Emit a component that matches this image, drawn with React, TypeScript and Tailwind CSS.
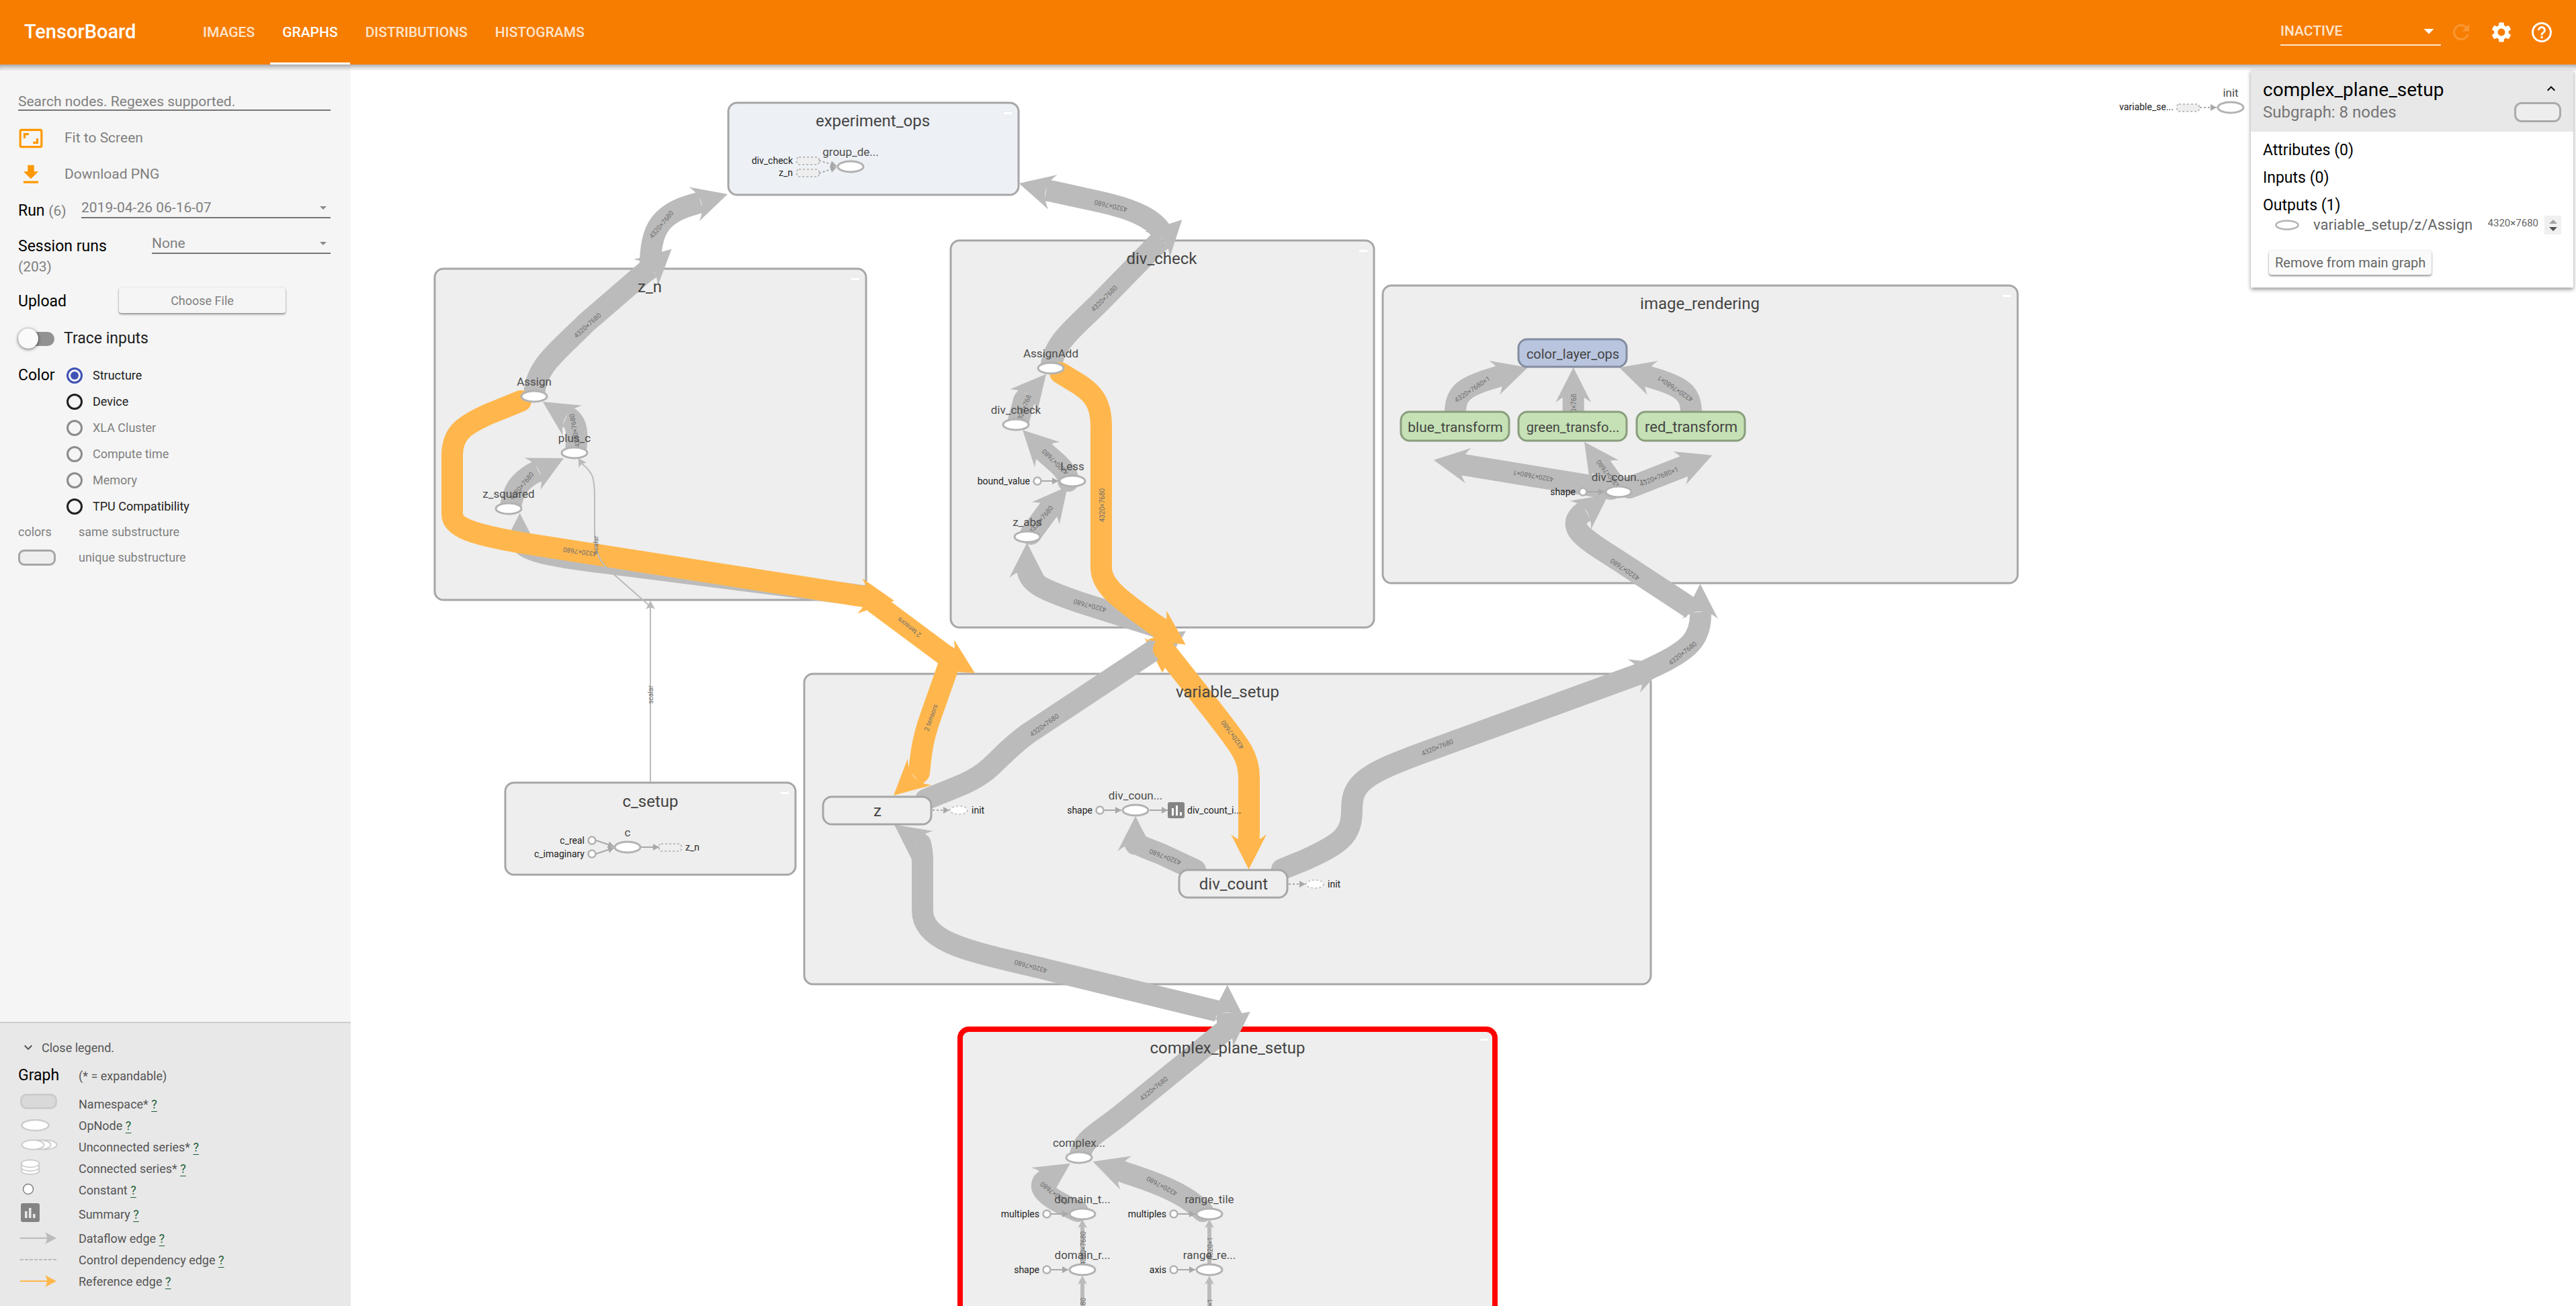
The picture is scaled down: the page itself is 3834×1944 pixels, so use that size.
import React from "react";
import {
  MdAspectRatio,
  MdFileDownload,
  MdRefresh,
  MdSettings,
  MdHelpOutline,
  MdExpandMore,
  MdExpandLess,
  MdArrowDropDown,
} from "react-icons/md";

const GRAY = "#bbbbbb";
const ORANGE = "#ffb74d";

/* ---------- graph primitives ---------- */

type Head = [tipX: number, tipY: number, baseX: number, baseY: number];

function ArrowHead({ head, color }: { head: Head; color: string }) {
  const [tx, ty, bx, by] = head;
  const angle = (Math.atan2(ty - by, tx - bx) * 180) / Math.PI;
  return (
    <path
      d="M0,0 L-52,26.5 Q-30,0 -52,-26.5 Z"
      fill={color}
      transform={`translate(${tx} ${ty}) rotate(${angle})`}
    />
  );
}

function Edge({ d, head, color = GRAY, round = false }: { d: string; head?: Head; color?: string; round?: boolean }) {
  let path = d;
  if (head) {
    const [tx, ty, bx, by] = head;
    path += ` L${bx + (tx - bx) * 0.2},${by + (ty - by) * 0.2}`;
  }
  return (
    <g>
      <path
        d={path}
        fill="none"
        stroke={color}
        strokeWidth={32}
        strokeLinejoin="round"
        strokeLinecap={round ? "round" : "butt"}
      />
      {head && <ArrowHead head={head} color={color} />}
    </g>
  );
}

function EdgeLabel({ x, y, r, t = "4320×7680" }: { x: number; y: number; r: number; t?: string }) {
  return (
    <text
      transform={`translate(${x} ${y}) rotate(${r})`}
      y={4}
      textAnchor="middle"
      className="fill-[#6e6e6e] text-[10px]"
    >
      {t}
    </text>
  );
}

function Group({
  x,
  y,
  w,
  h,
  fill = "#eeeeee",
  stroke = "#a6a6a6",
  sw = 3,
  minus = true,
}: {
  x: number;
  y: number;
  w: number;
  h: number;
  fill?: string;
  stroke?: string;
  sw?: number;
  minus?: boolean;
}) {
  return (
    <g>
      <rect x={x} y={y} width={w} height={h} rx={13} fill={fill} stroke={stroke} strokeWidth={sw} />
      {minus && <rect x={x + w - 22} y={y + 14} width={12} height={3} fill="#fff" />}
    </g>
  );
}

function Title({ x, y, children }: { x: number; y: number; children: string }) {
  return (
    <text x={x} y={y} textAnchor="middle" className="fill-[#444] text-[24px]">
      {children}
    </text>
  );
}

function Op({ x, y, label }: { x: number; y: number; label: string }) {
  return (
    <g>
      <ellipse cx={x} cy={y} rx={19} ry={8} fill="#fff" stroke="#b2b2b2" strokeWidth={3} />
      <text x={x} y={y - 16} textAnchor="middle" className="fill-[#4d4d4d] text-[17px]">
        {label}
      </text>
    </g>
  );
}

function Note({ x, y, t, end = false }: { x: number; y: number; t: string; end?: boolean }) {
  return (
    <text x={x} y={y} textAnchor={end ? "end" : "start"} className="fill-[#222] text-[14px]">
      {t}
    </text>
  );
}

function SmallArrow({ x1, y1, x2, y2, dotted = false }: { x1: number; y1: number; x2: number; y2: number; dotted?: boolean }) {
  const angle = (Math.atan2(y2 - y1, x2 - x1) * 180) / Math.PI;
  return (
    <g>
      <line
        x1={x1}
        y1={y1}
        x2={x2}
        y2={y2}
        stroke="#a8a8a8"
        strokeWidth={2}
        strokeDasharray={dotted ? "3 3" : undefined}
      />
      <path d="M0,0 L-9,5 L-9,-5 Z" fill="#a8a8a8" transform={`translate(${x2} ${y2}) rotate(${angle})`} />
    </g>
  );
}

function ConstIn({ cx, cy, to, label }: { cx: number; cy: number; to: [number, number]; label: string }) {
  return (
    <g>
      <SmallArrow x1={cx + 6} y1={cy} x2={to[0]} y2={to[1]} />
      <circle cx={cx} cy={cy} r={5.5} fill="#fff" stroke="#b2b2b2" strokeWidth={2.5} />
      <Note x={cx - 11} y={cy + 5} t={label} end />
    </g>
  );
}

function DashedBox({ x, y }: { x: number; y: number }) {
  return (
    <rect x={x} y={y} width={33} height={11} rx={3} fill="#eee" stroke="#aaa" strokeWidth={1.5} strokeDasharray="3 3" />
  );
}

function NodeBox({
  x,
  y,
  h,
  label,
  fill = "#eeeeee",
  stroke = "#a6a6a6",
  size = "text-[24px]",
}: {
  x: number;
  y: number;
  h: number;
  label: string;
  fill?: string;
  stroke?: string;
  size?: string;
}) {
  return (
    <g>
      <rect x={x} y={y} width={161} height={h} rx={13} fill={fill} stroke={stroke} strokeWidth={3} />
      <text x={x + 81} y={y + h / 2 + 8} textAnchor="middle" className={`fill-[#444] ${size}`}>
        {label}
      </text>
    </g>
  );
}

function InitOut({ x, y }: { x: number; y: number }) {
  return (
    <g>
      <SmallArrow x1={x} y1={y} x2={x + 25} y2={y} dotted />
      <ellipse cx={x + 39} cy={y} rx={13} ry={6} fill="#fff" stroke="#bbb" strokeWidth={1.5} strokeDasharray="3 3" />
      <Note x={x + 58} y={y + 5} t="init" />
    </g>
  );
}

function ThinEdge({ d, tip, r, w = 2 }: { d: string; tip: [number, number]; r: number; w?: number }) {
  return (
    <g>
      <path d={d} fill="none" stroke={GRAY} strokeWidth={w} />
      <path
        d="M0,0 L-13,7 Q-8,0 -13,-7 Z"
        fill={GRAY}
        transform={`translate(${tip[0]} ${tip[1]}) rotate(${r})`}
      />
    </g>
  );
}

/* ---------- graph canvas ---------- */

function GraphCanvas() {
  return (
    <svg
      viewBox="522 96 3312 1848"
      preserveAspectRatio="xMinYMin slice"
      className="block h-full w-full"
      role="img"
      aria-label="Main graph"
    >
      <Group x={1084} y={153} w={432} h={137} fill="#edf0f5" />
      <Group x={647} y={400} w={642} h={493} />
      <Group x={1415} y={358} w={630} h={576} />
      <Group x={2058} y={425} w={945} h={443} />
      <Group x={752} y={1165} w={432} h={137} />
      <Group x={1197} y={1003} w={1260} h={462} minus={false} />
      <Group x={1429} y={1532} w={796} h={600} stroke="#ff0000" sw={8} />

      {/* z_n */}
      <Edge d="M968,405 C966,345 980,318 1033,304" head={[1083, 289, 1033, 304]} />
      <Edge d="M795,588 C797,545 830,523 873,480 L960,405" head={[999.6, 370.8, 961, 406]} />
      <Edge d="M857,672 C860,640 858,632 849,623" head={[807.8, 598, 852, 626]} />
      <Edge d="M760,754 C764,730 772,718 792,705.5" head={[839, 682, 792, 705.5]} />
      <Edge d="M1286,887 L900,838 C820,828 772,820 774,800" head={[773.7, 763.8, 773.7, 816]} />
      <Edge d="M775,597 L728,616 C690,633 673,645 673,678 L673,765 C673,785 702,795 776,808 L1280,887" head={[1331, 894.3, 1279.5, 887]} color={ORANGE} round />
      <ThinEdge d="M968,1164 L968,900" tip={[968, 894]} r={-90} />
      <ThinEdge d="M967,902 L908,850 C892,836 885,822 885,790 L885,740 C885,710 882,703 866,690" tip={[860.6, 681.7]} r={-122} />
      <Edge d="M1300,896 L1405,974" head={[1451, 1002, 1406.4, 975.2]} color={ORANGE} />

      {/* div_check */}
      <Edge d="M1729,346 C1716,322 1675,309 1640,301 L1567,285" head={[1516.6, 273, 1567, 286]} />
      <Edge d="M1564,548 C1568,508 1600,488 1643,444 L1722,363" head={[1759.3, 327, 1722.5, 363.7]} />
      <Edge d="M1515,630 L1524,596" head={[1557, 556.8, 1523.5, 596.5]} />
      <Edge d="M1590,716 C1590,703 1575,690 1559,677" head={[1522, 640, 1559, 677]} round />
      <Edge d="M1534,795 L1556,765" head={[1589, 724, 1555.6, 765]} round />
      <Edge d="M1722,933 L1605,896 C1560,880 1529,870 1529,845" head={[1528.6, 808, 1528.6, 860]} />

      {/* variable_setup */}
      <Edge d="M1417,976 L1384,1070 C1370,1110 1370,1135 1368,1150" head={[1330, 1184, 1368.8, 1149]} color={ORANGE} />
      <ArrowHead head={[1730, 1001.4, 1730, 950]} color={ORANGE} />
      <Edge d="M1378,1190 L1425,1171 C1480,1149 1478,1130 1530,1092 L1720,966" head={[1765, 939.4, 1720.6, 966.5]} round />
      <Edge d="M1578,555 L1596,566 C1628,584 1639,600 1639,635 L1639,845 C1639,872 1665,891 1721,931" head={[1764.7, 959.6, 1721.4, 930.8]} color={ORANGE} round />
      <Edge d="M1732,966 L1805,1058 C1845,1110 1859,1125 1859,1158 L1859,1240" head={[1858.6, 1294, 1858.6, 1242]} color={ORANGE} round />
      <Edge d="M1812,1505 L1557,1443 C1450,1417 1373,1405 1373,1355 L1373,1290 C1373,1275 1373,1268 1370,1256" head={[1331, 1227.5, 1372.5, 1258]} />
      <Edge d="M1779,1295 L1730,1272 C1700,1260 1690,1258 1690,1250" head={[1690, 1215, 1690, 1267]} round />
      <Edge d="M1908,1294 L1940,1281 C1995,1256 2012,1245 2012,1205 C2012,1165 2030,1152 2130,1116 L2432,1006" head={[2480.5, 988, 2432, 1006]} round />
      <Edge d="M2440,1003 L2460,993 C2515,968 2531,950 2531,915" head={[2530.5, 869, 2530.5, 921]} />

      {/* image_rendering */}
      <Edge d="M2518,906 L2425,845 C2370,808 2328,790 2353,765" head={[2394, 736, 2352, 767]} />
      <Edge d="M2398,728 L2185,693" head={[2133.8, 684.7, 2184.8, 693]} round />
      <Edge d="M2406,726 L2387,700" head={[2358, 657.7, 2387.8, 700.4]} />
      <Edge d="M2425,726 L2499,697" head={[2548.3, 677.7, 2499, 697]} round />
      <Edge d="M2166,614 C2166,585 2180,575 2225,562" head={[2274, 547, 2225, 562]} />
      <Edge d="M2517,614 C2517,585 2503,575 2458,562" head={[2410, 547, 2458, 562]} />
      <Edge d="M2341.7,614 L2341.7,599" head={[2341.7, 547, 2341.7, 599]} />

      {/* complex_plane_setup */}
      <Edge d="M1827,1535 L1827,1518" head={[1826.7, 1466, 1826.7, 1518]} />
      <Edge d="M1607,1722 C1612,1695 1630,1690 1670,1658 L1819,1537" head={[1860.7, 1506, 1819, 1537]} />
      <Edge d="M1604,1803 C1575,1790 1545,1775 1552,1760" head={[1593, 1731.7, 1549.6, 1760]} round />
      <Edge d="M1790,1803 C1772,1785 1745,1768 1676,1746" head={[1626.5, 1729, 1676.4, 1746]} round />
      {[1611, 1800].map((x) => (
        <g key={x}>
          <ThinEdge d={`M${x},1882 L${x},1824`} tip={[x, 1815]} r={-90} w={6} />
          <ThinEdge d={`M${x},1950 L${x},1908`} tip={[x, 1899]} r={-90} w={6} />
        </g>
      ))}

      {/* edge labels */}
      <EdgeLabel x={984} y={334} r={-50} />
      <EdgeLabel x={874} y={484} r={-42} />
      <EdgeLabel x={855} y={641} r={-100} />
      <EdgeLabel x={776} y={723} r={-50} />
      <EdgeLabel x={863} y={822} r={188} />
      <EdgeLabel x={886} y={811} r={-88} t="scalar" />
      <EdgeLabel x={968} y={1034} r={-90} t="scalar" />
      <EdgeLabel x={1353} y={934} r={218} t="2 tensors" />
      <EdgeLabel x={1385} y={1068} r={-70} t="2 tensors" />
      <EdgeLabel x={1653} y={307} r={193} />
      <EdgeLabel x={1643} y={444} r={-45} />
      <EdgeLabel x={1524} y={606} r={-68} t="320×768" />
      <EdgeLabel x={1570} y={688} r={224} />
      <EdgeLabel x={1549} y={773} r={-50} />
      <EdgeLabel x={1640} y={752} r={-90} />
      <EdgeLabel x={1622} y={902} r={195} />
      <EdgeLabel x={1554} y={1079} r={-36} />
      <EdgeLabel x={1534} y={1439} r={195} />
      <EdgeLabel x={1834} y={1094} r={234} />
      <EdgeLabel x={1734} y={1276} r={201} />
      <EdgeLabel x={2139} y={1112} r={-22} />
      <EdgeLabel x={2504} y={972} r={-38} />
      <EdgeLabel x={2418} y={848} r={214} />
      <EdgeLabel x={2282} y={709} r={190} t="4320×7680×1" />
      <EdgeLabel x={2393} y={706} r={232} />
      <EdgeLabel x={2469} y={709} r={-22} t="4320×7680×1" />
      <EdgeLabel x={2191} y={579} r={-34} t="4320×7680×1" />
      <EdgeLabel x={2493} y={579} r={214} t="4320×7680×1" />
      <EdgeLabel x={2342} y={600} r={-90} t="0×768" />
      <EdgeLabel x={1717} y={1620} r={-39} />
      <EdgeLabel x={1569} y={1777} r={218} />
      <EdgeLabel x={1729} y={1766} r={208} />
      <EdgeLabel x={1612} y={1858} r={-90} />
      <EdgeLabel x={1801} y={1858} r={-90} t="4320×1" />
      <EdgeLabel x={1612} y={1957} r={-90} />
      <EdgeLabel x={1801} y={1950} r={-90} t="4320×1" />

      {/* experiment_ops */}
      <SmallArrow x1={1219} y1={239} x2={1245} y2={247} dotted />
      <SmallArrow x1={1219} y1={258} x2={1245} y2={249} dotted />
      <DashedBox x={1186} y={234} />
      <DashedBox x={1186} y={252} />
      <Note x={1180} y={244} t="div_check" end />
      <Note x={1180} y={262} t="z_n" end />
      <Op x={1266} y={248} label="group_de..." />
      <Op x={795} y={590} label="Assign" />
      <Op x={855} y={674} label="plus_c" />
      <Op x={757} y={757} label="z_squared" />

      {/* c_setup */}
      <ConstIn cx={881} cy={1251} to={[914, 1260]} label="c_real" />
      <ConstIn cx={881} cy={1271} to={[914, 1262]} label="c_imaginary" />
      <SmallArrow x1={954} y1={1261} x2={981} y2={1261} />
      <Op x={934} y={1261} label="c" />
      <DashedBox x={981} y={1256} />
      <Note x={1020} y={1266} t="z_n" />

      <Op x={1564} y={548} label="AssignAdd" />
      <Op x={1512} y={632} label="div_check" />
      <ConstIn cx={1544} cy={716} to={[1575, 716]} label="bound_value" />
      <Op x={1596} y={716} label="Less" />
      <Op x={1529} y={799} label="z_abs" />

      <InitOut x={1388} y={1206} />
      <NodeBox x={1225} y={1186} h={41} label="z" />
      <InitOut x={1918} y={1316} />
      <NodeBox x={1755} y={1295} h={41} label="div_count" />
      <ConstIn cx={1637} cy={1206} to={[1669, 1206]} label="shape" />
      <SmallArrow x1={1711} y1={1206} x2={1738} y2={1206} />
      <Op x={1690} y={1206} label="div_coun..." />
      <rect x={1738} y={1194} width={25} height={24} rx={3} fill="#848484" />
      <path d="M1744,1203h3v11h-3z M1750,1199h3v15h-3z M1756,1209h3v5h-3z" fill="#fff" />
      <Note x={1767} y={1211} t="div_count_i..." />

      <NodeBox x={2260} y={505} h={41} label="color_layer_ops" fill="#b9c5de" stroke="#838ca0" size="text-[20px]" />
      <NodeBox x={2085} y={613} h={43} label="blue_transform" fill="#c5e1b5" stroke="#899d7d" size="text-[21px]" />
      <NodeBox x={2260} y={613} h={43} label="green_transfo..." fill="#c5e1b5" stroke="#899d7d" size="text-[20px]" />
      <NodeBox x={2436} y={613} h={43} label="red_transform" fill="#c5e1b5" stroke="#899d7d" size="text-[22px]" />
      <ConstIn cx={2356} cy={732} to={[2388, 732]} label="shape" />
      <Op x={2409} y={732} label="div_coun..." />

      <Op x={1606} y={1723} label="complex..." />
      <ConstIn cx={1558} cy={1807} to={[1590, 1807]} label="multiples" />
      <Op x={1611} y={1807} label="domain_t..." />
      <ConstIn cx={1747} cy={1807} to={[1779, 1807]} label="multiples" />
      <Op x={1800} y={1807} label="range_tile" />
      <ConstIn cx={1558} cy={1890} to={[1590, 1890]} label="shape" />
      <Op x={1611} y={1890} label="domain_r..." />
      <ConstIn cx={1747} cy={1890} to={[1779, 1890]} label="axis" />
      <Op x={1800} y={1890} label="range_re..." />

      {/* auxiliary init node */}
      <SmallArrow x1={3274} y1={160} x2={3299} y2={160} dotted />
      <DashedBox x={3240} y={155} />
      <Note x={3235} y={164} t="variable_se..." end />
      <Op x={3320} y={160} label="init" />

      <Title x={1299} y={188}>experiment_ops</Title>
      <Title x={967} y={435}>z_n</Title>
      <Title x={1729} y={393}>div_check</Title>
      <Title x={2530} y={460}>image_rendering</Title>
      <Title x={968} y={1201}>c_setup</Title>
      <Title x={1827} y={1038}>variable_setup</Title>
      <Title x={1827} y={1568}>complex_plane_setup</Title>
    </svg>
  );
}

/* ---------- header ---------- */

const TABS = ["IMAGES", "GRAPHS", "DISTRIBUTIONS", "HISTOGRAMS"];

function Header() {
  return (
    <header className="flex h-24 shrink-0 items-stretch bg-[#f77d00] pl-9 pr-[33px] text-white">
      <h1 className="flex w-[248px] items-center text-[29px] font-medium">TensorBoard</h1>
      <nav className="flex gap-[5px]">
        {TABS.map((t) => (
          <button
            key={t}
            className={
              t === "GRAPHS"
                ? "border-b-[3px] border-white px-[18px] pt-[5px] text-[21px] font-medium"
                : "border-b-[3px] border-transparent px-[18px] pt-[5px] text-[21px] font-medium text-white/80"
            }
          >
            {t}
          </button>
        ))}
      </nav>
      <div className="ml-auto flex items-center">
        <div className="relative mr-3 w-[239px]">
          <select
            aria-label="Inactive plugins"
            className="h-10 w-full appearance-none border-b-2 border-white/80 bg-transparent text-[21px] font-medium text-white/80 outline-none"
          >
            <option>INACTIVE</option>
          </select>
          <MdArrowDropDown className="pointer-events-none absolute right-0 top-0 size-9" />
        </div>
        <div className="flex items-center gap-6">
          <button aria-label="Reload" className="opacity-20">
            <MdRefresh className="size-9" />
          </button>
          <button aria-label="Settings">
            <MdSettings className="size-9" />
          </button>
          <button aria-label="Help">
            <MdHelpOutline className="size-9" />
          </button>
        </div>
      </div>
    </header>
  );
}

/* ---------- sidebar ---------- */

const COLOR_OPTIONS = [
  { label: "Structure", on: true, off: false },
  { label: "Device", on: false, off: false },
  { label: "XLA Cluster", on: false, off: true },
  { label: "Compute time", on: false, off: true },
  { label: "Memory", on: false, off: true },
  { label: "TPU Compatibility", on: false, off: false },
];

function SelectBox({ id, value }: { id: string; value: string }) {
  return (
    <span className="relative block grow">
      <select
        id={id}
        className="block h-[30px] w-full appearance-none border-b-2 border-[#757575] bg-transparent text-[21px] leading-[28px] text-[#808080] outline-none"
      >
        <option>{value}</option>
      </select>
      <svg viewBox="0 0 10 5" className="pointer-events-none absolute right-[6px] top-3 h-[5px] w-[10px]" aria-hidden="true">
        <path d="M0,0H10L5,5Z" fill="#8a8a8a" />
      </svg>
    </span>
  );
}

function Controls() {
  return (
    <div className="flex flex-col pl-[27px] pr-[30px] pt-[41px]">
      <input
        type="text"
        aria-label="Search nodes"
        placeholder="Search nodes. Regexes supported."
        className="h-7 w-full border-b-2 border-[#757575] bg-transparent pt-[3px] text-[21px] outline-none placeholder:text-[#808080]"
      />
      <div className="mt-[14px] flex flex-col items-start text-[21px] text-[#808080]">
        <button className="flex h-[54px] items-center gap-[31px]">
          <MdAspectRatio className="size-[38px] text-[#ff9800]" />
          Fit to Screen
        </button>
        <button className="flex h-[54px] items-center gap-[31px]">
          <MdFileDownload className="size-[38px] text-[#ff9800]" />
          Download PNG
        </button>
      </div>
      <div className="mt-2 flex items-start">
        <label htmlFor="run" className="w-[94px] pt-1 text-[23px] leading-[30px]">
          Run <span className="text-[21px] text-[#808080]">(6)</span>
        </label>
        <SelectBox id="run" value="2019-04-26 06-16-07" />
      </div>
      <div className="mt-[19px] flex items-start">
        <label htmlFor="session" className="w-[199px] pt-1 text-[23px] leading-[30px]">
          Session runs
        </label>
        <SelectBox id="session" value="None" />
      </div>
      <p className="mt-px text-[21px] leading-[28px] text-[#808080]">(203)</p>
      <div className="mt-[17px] flex items-center">
        <span className="w-[150px] pt-1 text-[23px] leading-[30px]">Upload</span>
        <button className="h-[38px] w-[248px] rounded-[4px] bg-[#f5f5f5] text-[18px] text-[#808080] shadow-[0_2px_3px_rgba(0,0,0,0.4),0_0_2px_rgba(0,0,0,0.15)]">
          Choose File
        </button>
      </div>
      <label className="mt-[23px] flex h-[30px] items-center gap-[14px] text-[23px] text-[#212121]">
        <input
          type="checkbox"
          role="switch"
          className="flex h-[21px] w-[54px] appearance-none items-center rounded-full bg-[#929292] before:block before:size-[30px] before:rounded-full before:bg-[#fafafa] before:shadow-[0_1px_5px_rgba(0,0,0,0.6)]"
        />
        Trace inputs
      </label>
      <fieldset className="mt-5 flex">
        <legend className="float-left w-[72px] text-[23px] leading-[39px]">Color</legend>
        <div className="flex flex-col">
          {COLOR_OPTIONS.map((o) => (
            <label
              key={o.label}
              className={
                o.off
                  ? "flex h-[39px] items-center gap-[15px] text-[18px] text-[#808080]"
                  : "flex h-[39px] items-center gap-[15px] text-[18px] text-[#212121]"
              }
            >
              <input
                type="radio"
                name="color-by"
                defaultChecked={o.on}
                disabled={o.off}
                className="flex size-6 appearance-none items-center justify-center rounded-full border-[3px] border-[#212121] checked:border-[#3f51b5] checked:before:size-3 checked:before:rounded-full checked:before:bg-[#3f51b5] disabled:border-[#8c8c8c]"
              />
              {o.label}
            </label>
          ))}
        </div>
      </fieldset>
      <div className="grid grid-cols-[90px_1fr] items-center text-[18px] leading-[38px] text-[#808080]">
        <span>colors</span>
        <span>same substructure</span>
        <span className="h-6 w-14 rounded-[9px] border-[3px] border-[#a6a6a6] bg-[#eee]" />
        <span>unique substructure</span>
      </div>
    </div>
  );
}

function LegendIcon({ children }: { children: React.ReactNode }) {
  return (
    <svg viewBox="0 0 60 32" className="h-8 w-[60px]" aria-hidden="true">
      {children}
    </svg>
  );
}

const LEGEND = [
  {
    label: "Namespace*",
    icon: <rect x="4.5" y="2.5" width="52" height="20" rx="8" fill="#d9d9d9" stroke="#ccc" strokeWidth="3" />,
  },
  {
    label: "OpNode",
    icon: <ellipse cx="25.5" cy="16" rx="20" ry="8" fill="#fff" stroke="#ccc" strokeWidth="2.5" />,
  },
  {
    label: "Unconnected series*",
    icon: (
      <g fill="#fff" stroke="#ccc" strokeWidth="2">
        <ellipse cx="41" cy="13" rx="16.5" ry="7" />
        <ellipse cx="32" cy="13" rx="16.5" ry="7" />
        <ellipse cx="22" cy="13" rx="16.5" ry="7" />
      </g>
    ),
  },
  {
    label: "Connected series*",
    icon: (
      <g fill="#fff" stroke="#c4c4c4" strokeWidth="1.5">
        <ellipse cx="18" cy="19.5" rx="13.5" ry="5.5" />
        <ellipse cx="18" cy="14.5" rx="13.5" ry="5.5" />
        <ellipse cx="18" cy="9" rx="13.5" ry="5.5" />
      </g>
    ),
  },
  {
    label: "Constant",
    icon: <circle cx="15" cy="15" r="7.5" fill="#fff" stroke="#848484" strokeWidth="1.5" />,
  },
  {
    label: "Summary",
    icon: (
      <g>
        <rect x="4" y="0" width="28" height="28" rx="3" fill="#848484" />
        <path d="M10,12h3.5v10h-3.5z M16,7h3.5v15h-3.5z M22,16h3.5v6h-3.5z" fill="#e8e8e8" />
      </g>
    ),
  },
  {
    label: "Dataflow edge",
    icon: (
      <g fill="#bbb">
        <rect x="3" y="15" width="42" height="2" />
        <path d="M57,16 L40,25 Q46,16 40,7 Z" />
      </g>
    ),
  },
  {
    label: "Control dependency edge",
    icon: <path d="M3,16H57" stroke="#bbb" strokeWidth="2" strokeDasharray="5 2" />,
  },
  {
    label: "Reference edge",
    icon: (
      <g fill="#ffb74d">
        <rect x="3" y="15" width="42" height="2" />
        <path d="M57,16 L40,25 Q46,16 40,7 Z" />
      </g>
    ),
  },
];

function Legend() {
  return (
    <div className="border-t-2 border-[#ccc] bg-[#e8e8e8] px-[27px] pb-[21px] pt-5 text-[18px] text-[#555]">
      <button className="flex h-8 items-center gap-2 pl-[3px]">
        <MdExpandMore className="size-6" />
        Close legend.
      </button>
      <div className="flex h-[52px] items-center">
        <h2 className="w-[90px] text-[23px] text-black">Graph</h2>
        <span>(* = expandable)</span>
      </div>
      <ul>
        {LEGEND.map((l) => (
          <li
            key={l.label}
            className={l.label === "Summary" ? "flex h-10 items-center" : "flex h-8 items-center"}
          >
            <span className="w-[90px]">
              <LegendIcon>{l.icon}</LegendIcon>
            </span>
            <span>
              {l.label}{" "}
              <a href="#help" className="text-[#1b5e36] underline underline-offset-4">
                ?
              </a>
            </span>
          </li>
        ))}
      </ul>
    </div>
  );
}

/* ---------- node info ---------- */

function NodeInfo() {
  return (
    <section className="absolute right-1 top-2 w-[480px] bg-white shadow-[0_3px_6px_rgba(0,0,0,0.4)]">
      <div className="flex justify-between bg-[#e8e8e8] px-[18px] py-[13px]">
        <div>
          <h2 className="text-[28px] leading-[34px] text-black">complex_plane_setup</h2>
          <p className="text-[24px] leading-[32px] text-[#757575]">Subgraph: 8 nodes</p>
        </div>
        <div className="flex flex-col items-end justify-between">
          <button aria-label="Collapse" className="pr-[3px] pt-[3px]">
            <MdExpandLess className="size-6" />
          </button>
          <span className="mb-px h-[30px] w-[70px] rounded-[11px] border-[3px] border-[#aaa] bg-[#eee]" />
        </div>
      </div>
      <div className="px-[18px] pb-[19px] pt-[13px] text-[23px] leading-[30px] text-black">
        <h3>Attributes (0)</h3>
        <h3 className="mt-[11px]">Inputs (0)</h3>
        <h3 className="mt-[11px]">Outputs (1)</h3>
        <div className="flex h-7 items-center pl-[18px]">
          <svg viewBox="0 0 36 16" className="h-4 w-9" aria-hidden="true">
            <ellipse cx="18" cy="8" rx="16.5" ry="6.5" fill="#fff" stroke="#b2b2b2" strokeWidth="2.5" />
          </svg>
          <a href="#assign" className="ml-[21px] text-[22px] text-[#666]">
            variable_setup/z/Assign
          </a>
          <span className="ml-auto self-start pr-[9px] text-[15px] leading-[22px] text-[#666]">4320×7680</span>
          <span className="flex h-7 w-[25px] flex-col items-center justify-around bg-[#f0f0f0] py-[3px]">
            <svg viewBox="0 0 12 6" className="h-[6px] w-3" aria-hidden="true">
              <path d="M0,6H12L6,0Z" fill="#a0a0a0" />
            </svg>
            <svg viewBox="0 0 12 6" className="h-[6px] w-3" aria-hidden="true">
              <path d="M0,0H12L6,6Z" fill="#505050" />
            </svg>
          </span>
        </div>
        <button className="ml-[9px] mt-6 flex h-9 items-center rounded-[4px] bg-[#fafafa] px-[9px] text-[20px] text-[#666] shadow-[0_2px_3px_rgba(0,0,0,0.4),0_0_2px_rgba(0,0,0,0.15)]">
          Remove from main graph
        </button>
      </div>
    </section>
  );
}

export default function App() {
  return (
    <div className="flex h-screen flex-col overflow-hidden bg-white font-[Roboto,sans-serif]">
      <Header />
      <div className="relative flex min-h-0 grow">
        <aside className="flex w-[522px] shrink-0 flex-col justify-between bg-[#f5f5f5] text-black">
          <Controls />
          <Legend />
        </aside>
        <main className="relative min-w-0 grow overflow-hidden">
          <GraphCanvas />
          <NodeInfo />
        </main>
        <div className="pointer-events-none absolute inset-x-0 top-0 h-[9px] shadow-[inset_0_8px_9px_-5px_rgba(0,0,0,0.4)]" />
      </div>
    </div>
  );
}
